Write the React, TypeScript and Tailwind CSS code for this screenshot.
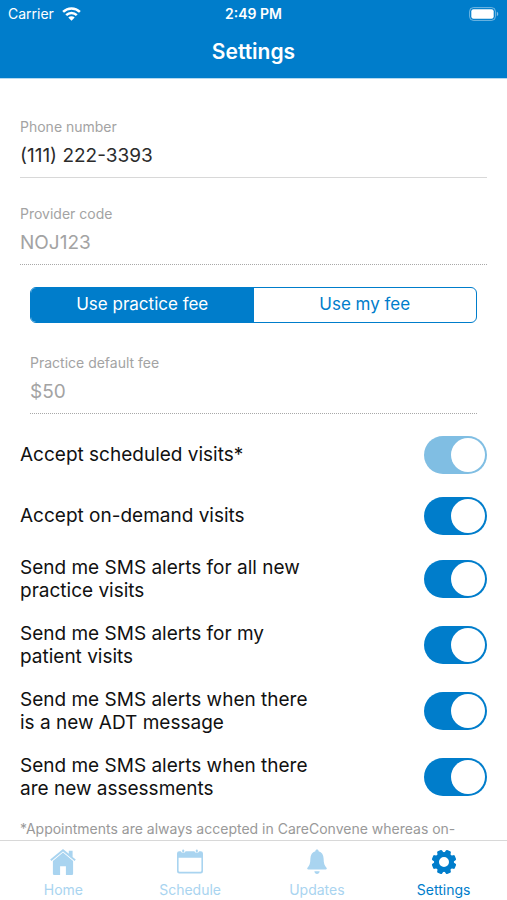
import React, { useState } from "react";

const ALERTS = [
    { id: "scheduled", label: "Accept scheduled visits*", disabled: true },
    { id: "on-demand", label: "Accept on-demand visits", disabled: false },
    { id: "sms-practice", label: "Send me SMS alerts for all new practice visits", disabled: false },
    { id: "sms-patient", label: "Send me SMS alerts for my patient visits", disabled: false },
    { id: "sms-adt", label: "Send me SMS alerts when there is a new ADT message", disabled: false },
    { id: "sms-assessments", label: "Send me SMS alerts when there are new assessments", disabled: false },
];

const WifiIcon = () => (
    <svg width="19" height="14" viewBox="0 0 19 14" fill="none" stroke="currentColor" strokeWidth="2.5" aria-hidden="true">
        <path d="M1.1 4.9a12 12 0 0 1 16.8 0" />
        <path d="M4.2 8.1a7.6 7.6 0 0 1 10.6 0" />
        <path d="M9.5 13.8 6.3 10.6a4.5 4.5 0 0 1 6.4 0Z" fill="currentColor" stroke="none" />
    </svg>
);

const BatteryIcon = () => (
    <svg width="30" height="14" viewBox="0 0 30 14" aria-hidden="true">
        <rect x="0.6" y="0.6" width="25.8" height="12.8" rx="3.8" fill="none" stroke="#fff" strokeOpacity="0.45" />
        <rect x="2.3" y="2.3" width="22.4" height="9.4" rx="2.2" fill="#fff" />
        <path d="M27.8 4.8c1.9.7 1.9 3.7 0 4.4Z" fill="#fff" fillOpacity="0.5" />
    </svg>
);

const HomeIcon = () => (
    <svg width="26" height="26" viewBox="0 0 26 26" fill="currentColor" aria-hidden="true">
        <path d="M13 0 0.2 10.6l1.2 1.4L13 2.4l11.6 9.6 1.2-1.4-3.2-2.7V1.8h-3.8v3Z" />
        <path d="M13 3.6 2.9 12V24.800q0 1.200 1.200 1.200h6v-8.800h5.800V26h6q1.200 0 1.200-1.200V12Z" />
    </svg>
);

const ScheduleIcon = () => (
    <svg width="26" height="26" viewBox="0 0 26 26" fill="currentColor" aria-hidden="true">
        <path
            fillRule="evenodd"
            d="M2.2 2.2h1.6a2.600 2.600 0 0 0 4.800 0h8.800a2.600 2.600 0 0 0 4.800 0h1.600a2.200 2.200 0 0 1 2.200 2.200v17.800a2.200 2.200 0 0 1-2.200 2.200H2.200A2.200 2.200 0 0 1 0 22.200V4.400a2.200 2.200 0 0 1 2.200-2.200ZM1.600 8.800v12.800a1.200 1.200 0 0 0 1.200 1.200h20.400a1.200 1.200 0 0 0 1.200-1.200V8.800Z"
        />
        <rect x="5.2" y="0.6" width="2" height="3" rx="1" />
        <rect x="18.8" y="0.6" width="2" height="3" rx="1" />
    </svg>
);

const BellIcon = () => (
    <svg width="26" height="26" viewBox="0 0 26 26" fill="currentColor" aria-hidden="true">
        <path d="M13 0.6c1 0 1.6.7 1.6 1.6 3.2.8 4.900 3.600 5 7.400.1 4.800.900 7.300 2.900 9.100.600.600.300 1.800-.8 1.800H4.300c-1.100 0-1.400-1.200-.8-1.800 2-1.800 2.800-4.300 2.900-9.100.1-3.800 1.800-6.600 5-7.400 0-.9.600-1.600 1.600-1.600Z" />
        <path d="M10.400 22.200h5.200c-.2 1.700-1.200 2.700-2.600 2.700S10.600 23.900 10.400 22.200Z" />
    </svg>
);

const GearIcon = () => (
    <svg width="26" height="26" viewBox="0 0 26 26" fill="currentColor" aria-hidden="true">
        <path
            fillRule="evenodd"
            d="M13 3a10 10 0 1 0 0 20a10 10 0 1 0 0-20ZM13 8a5 5 0 1 1 0 10a5 5 0 1 1 0-10Z"
        />
        {[22.5, 67.5, 112.5, 157.5, 202.5, 247.5, 292.5, 337.5].map((angle) => (
            <path key={angle} d="M9.6 5.2 10.3 1.6Q10.5 0.7 11.4 0.7h3.2Q15.5 0.7 15.7 1.6L16.400 5.200Z" transform={`rotate(${angle} 13 13)`} />
        ))}
    </svg>
);

const TABS = [
    { name: "Home", Icon: HomeIcon },
    { name: "Schedule", Icon: ScheduleIcon },
    { name: "Updates", Icon: BellIcon },
    { name: "Settings", Icon: GearIcon },
];

const App: React.FC = () => {
    const [phone, setPhone] = useState("(111) 222-3393");
    const [feeType, setFeeType] = useState("practice");
    const [enabled, setEnabled] = useState<Record<string, boolean>>(
        Object.fromEntries(ALERTS.map((a) => [a.id, true]))
    );

    return (
        <div className="flex flex-col h-screen bg-white font-['Inter',sans-serif] overflow-hidden">
            {/* Status bar + title */}
            <header className="shrink-0 bg-[#007dcb] text-white border-b border-[#b3d9f0]">
                <div className="grid grid-cols-3 items-center h-7 px-2 text-sm">
                    <div className="flex items-center gap-2">
                        <span>Carrier</span>
                        <WifiIcon />
                    </div>
                    <span className="text-center font-semibold">2:49 PM</span>
                    <div className="flex justify-end">
                        <BatteryIcon />
                    </div>
                </div>
                <h1 className="h-[50px] text-center text-[21px] leading-12 font-semibold">Settings</h1>
            </header>

            <main className="flex-1 min-h-0 overflow-y-auto [scrollbar-width:none] px-5 pt-10">
                {/* Contact fields */}
                <div className="border-b border-[#d8d8d8] pb-[7px]">
                    <label htmlFor="phone" className="block text-sm leading-4 text-[#a3a3a3]">Phone number</label>
                    <input
                        id="phone"
                        type="tel"
                        value={phone}
                        onChange={(e) => setPhone(e.target.value)}
                        className="block w-full h-7 mt-[7px] text-[19px] text-[#2b2b2b] outline-none"
                    />
                </div>
                <div className="border-b border-dotted border-[#a8a8a8] mt-7 pb-[7px]">
                    <label htmlFor="provider" className="block text-sm leading-4 text-[#a3a3a3]">Provider code</label>
                    <input
                        id="provider"
                        type="text"
                        value="NOJ123"
                        disabled
                        className="block w-full h-7 mt-[7px] text-[19px] text-[#a3a3a3]"
                    />
                </div>

                {/* Fee */}
                <div className="px-[10px]">
                    <div className="flex h-9 mt-[22px] border border-[#007dcb] rounded-md overflow-hidden text-[17px]">
                        <button
                            onClick={() => setFeeType("practice")}
                            className={feeType === "practice" ? "flex-1 bg-[#007dcb] text-white" : "flex-1 text-[#007dcb]"}
                        >
                            Use practice fee
                        </button>
                        <button
                            onClick={() => setFeeType("mine")}
                            className={feeType === "mine" ? "flex-1 bg-[#007dcb] text-white" : "flex-1 text-[#007dcb]"}
                        >
                            Use my fee
                        </button>
                    </div>
                    <div className="border-b border-dotted border-[#a8a8a8] mt-8 pb-[7px]">
                        <label htmlFor="fee" className="block text-sm leading-4 text-[#a3a3a3]">Practice default fee</label>
                        <input
                            id="fee"
                            type="text"
                            value="$50"
                            disabled
                            className="block w-full h-7 mt-[7px] text-[19px] text-[#a3a3a3]"
                        />
                    </div>
                </div>

                {/* Switches */}
                <div className="mt-[10px]">
                    {ALERTS.map((alert) => (
                        <div key={alert.id} className="flex items-center justify-between min-h-[61px] py-[10px]">
                            <label htmlFor={alert.id} className="max-w-[290px] text-[19px] leading-[23px] text-[#111111]">
                                {alert.label}
                            </label>
                            <input
                                id={alert.id}
                                type="checkbox"
                                role="switch"
                                checked={enabled[alert.id]}
                                disabled={alert.disabled}
                                onChange={(e) => setEnabled((prev) => ({ ...prev, [alert.id]: e.target.checked }))}
                                className="appearance-none shrink-0 flex items-center w-[63px] h-[38px] px-[2px] rounded-full bg-gray-300 checked:bg-[#007dcb] checked:justify-end disabled:bg-[#80bee3] before:content-[''] before:size-[34px] before:rounded-full before:bg-white"
                            />
                        </div>
                    ))}
                </div>
                <p className="pt-[10px] text-sm leading-[18px] text-[#999999]">
                    *Appointments are always accepted in CareConvene whereas on-
                </p>
            </main>

            {/* Tab bar */}
            <nav className="shrink-0 grid grid-cols-4 h-[60px] bg-white border-t border-[#d8d8d8]">
                {TABS.map(({ name, Icon }) => (
                    <a
                        key={name}
                        href={`#${name.toLowerCase()}`}
                        className={
                            name === "Settings"
                                ? "flex flex-col items-center gap-1 pt-2 text-sm leading-[22px] text-[#007dcb]"
                                : "flex flex-col items-center gap-1 pt-2 text-sm leading-[22px] text-[#a9d4f0]"
                        }
                    >
                        <Icon />
                        {name}
                    </a>
                ))}
            </nav>
        </div>
    );
};

export default App;
